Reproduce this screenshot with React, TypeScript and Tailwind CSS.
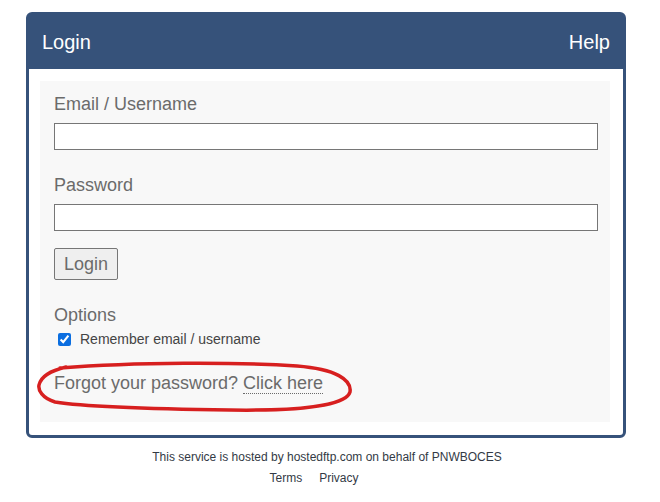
import React from "react";

function Ring() {
  // hand-drawn red circle around the reset link
  return (
    <svg
      className="pointer-events-none absolute left-[-18px] top-[-16px]"
      width="320"
      height="60"
      viewBox="0 0 320 60"
      fill="none"
    >
      <path
        d="M24 12 C 100 6, 200 6, 261 10 C 300 13, 316 24, 314 36 C 310 50, 260 55, 194 54 C 120 53, 50 51, 19 46 C 6 42, 2 34, 3 29 C 5 20, 14 15, 30 11"
        stroke="#d71f1f"
        strokeWidth="3.5"
        strokeLinecap="round"
      />
    </svg>
  );
}

export default function App() {
  return (
    <div className="min-h-screen bg-white pt-[12px] font-['Liberation_Sans',Arial,sans-serif]">
      <div className="ml-[26px] w-[600px] rounded-[6px] border-[3px] border-[#36527a] bg-white">
        <div className="flex h-[54px] items-center justify-between bg-[#36527a] px-[13px] text-[20px] text-white">
          <span>Login</span>
          <span>Help</span>
        </div>
        <div className="pl-[11px] pr-[13px] pt-[12px] pb-[13px]">
          <div className="bg-[#f8f8f8] pl-[14px] pr-[12px] pt-[12px] pb-[28px] text-[18px] text-[#6b6b6b]">
            <label className="block leading-[22px]">Email / Username</label>
            <input
              type="text"
              className="mt-[8px] block h-[27px] w-full border border-[#767676] bg-white"
            />
            <label className="mt-[24px] block leading-[22px]">Password</label>
            <input
              type="password"
              className="mt-[8px] block h-[27px] w-full border border-[#767676] bg-white"
            />
            <button className="mt-[17px] h-[32px] rounded-[2px] border border-[#767676] bg-[#efefef] px-[9px] text-[18px] text-[#6b6b6b]">
              Login
            </button>
            <div className="mt-[24px] leading-[22px]">Options</div>
            <div className="mt-[4px] flex h-[18px] items-center text-[14px] text-[#444]">
              <input
                type="checkbox"
                defaultChecked
                className="ml-[4px] mr-[9px] h-[13px] w-[13px] accent-[#0b6ee0]"
              />
              <span>Remember email / username</span>
            </div>
            <div className="relative mt-[24px] leading-[22px]">
              <Ring />
              <span>Forgot your password? </span>
              <a className="border-b border-dotted border-[#6b6b6b] text-[#6b6b6b]">
                Click here
              </a>
            </div>
          </div>
        </div>
      </div>
      <div className="mt-[10px] text-center text-[12px] leading-[18px] text-[#333a45]">
        <div className="pr-[6px]">This service is hosted by hostedftp.com on behalf of PNWBOCES</div>
        <div className="mt-[3px] flex justify-center gap-[17px] pr-[32px]">
          <a>Terms</a>
          <a>Privacy</a>
        </div>
      </div>
    </div>
  );
}
